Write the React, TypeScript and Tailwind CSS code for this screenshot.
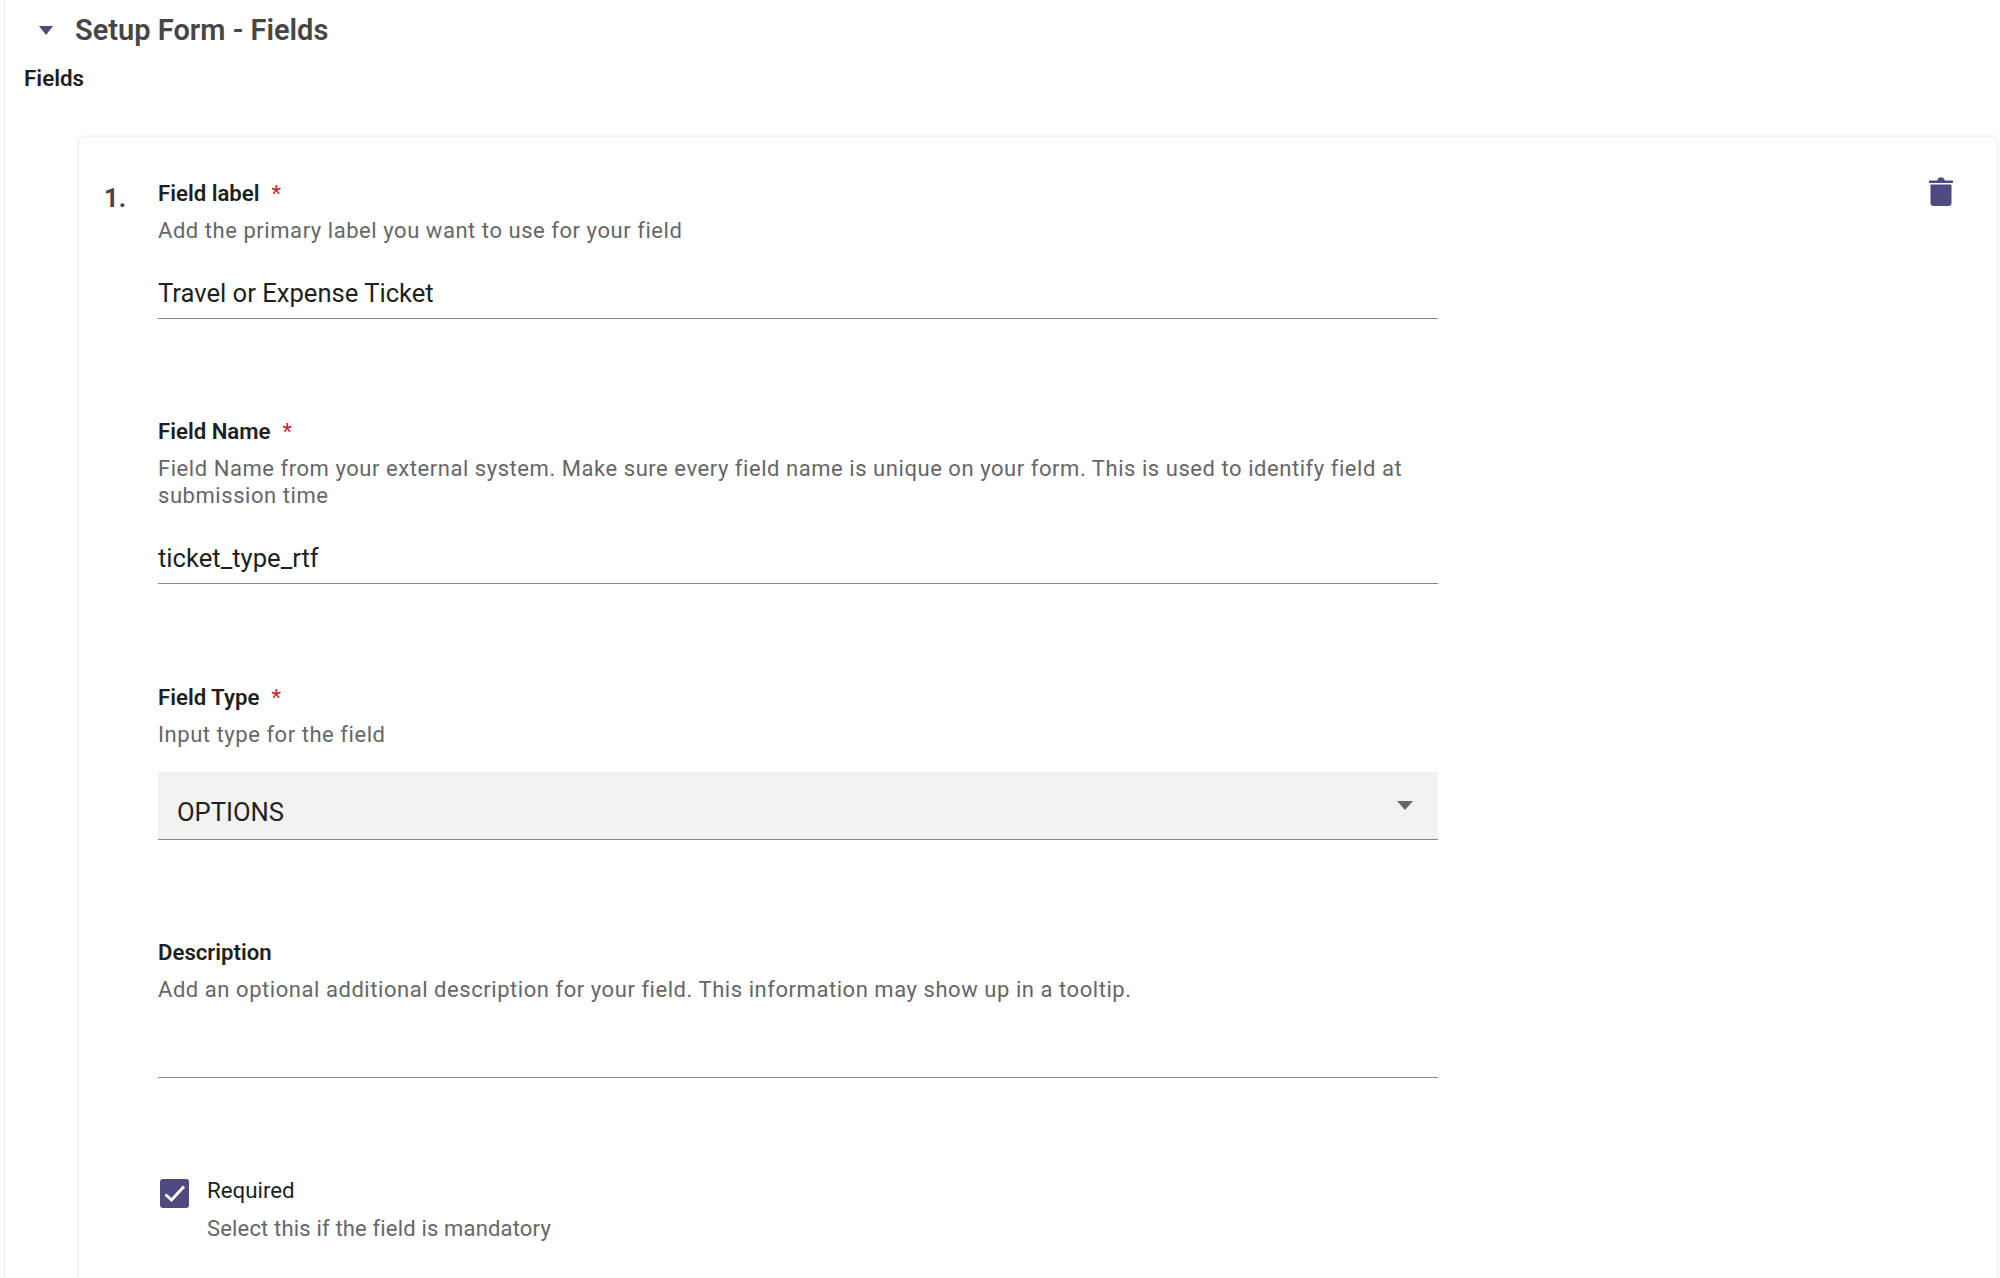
const Label = ({ text, required }: { text: string; required?: boolean }) => (
  <div className="h-[27px] text-[22.200px] leading-[27px] font-semibold text-[#201f1e]">
    {text}
    {required && <span className="ml-3 font-normal text-[#c4262e]">*</span>}
  </div>
)

const Hint = ({ children }: { children: string }) => (
  <p className="mt-[10px] text-[22px] leading-[27px] tracking-[0.55px] text-[#666666]">{children}</p>
)

const TextInput = ({ value }: { value?: string }) => (
  <div className="mt-[27px] h-[48px] border-b border-[#8a8886] text-[25.600px] leading-[44px] text-[#201f1e]">
    {value}
  </div>
)

export default function App() {
  return (
    <div className="h-[1278px] overflow-hidden bg-white font-['Roboto',sans-serif]">
      <div className="ml-1 h-full border-l border-[#ececec] pr-[2px]">
        <div className="flex h-[60px] items-center pl-[34px]">
          <svg className="h-[9px] w-[14px]" viewBox="0 0 14 9">
            <path d="M0 0h14L7 9z" fill="#4f4a80" />
          </svg>
          <h2 className="ml-[22px] text-[29px] leading-[60px] font-semibold text-[#484644]">Setup Form - Fields</h2>
        </div>
        <div className="mt-1 pl-[19px] text-[22.400px] leading-[28px] font-semibold text-[#201f1e]">Fields</div>

        <div className="mt-[44px] ml-[73px] flex h-[1200px] rounded-t-lg border border-b-0 border-[#f0f0f0] bg-white pt-[43px] pl-[25px] shadow-[0_0_4px_rgba(0,0,0,0.06)]">
          <div className="w-[54px] pt-[3px] text-[25.500px] leading-[30px] font-bold text-[#484644]">1.</div>

          <div className="w-[1280px]">
            <Label text="Field label" required />
            <Hint>Add the primary label you want to use for your field</Hint>
            <TextInput value="Travel or Expense Ticket" />

            <div className="mt-[99px]">
              <Label text="Field Name" required />
              <Hint>
                Field Name from your external system. Make sure every field name is unique on your form. This is used to identify field at submission time
              </Hint>
              <TextInput value="ticket_type_rtf" />
            </div>

            <div className="mt-[100px]">
              <Label text="Field Type" required />
              <Hint>Input type for the field</Hint>
              <div className="mt-[24px] flex h-[68px] items-center justify-between border-b-[1.500px] border-[#8a8886] bg-[#f3f2f1] pr-[25px] pl-[19px]">
                <span className="pt-[14px] text-[25.600px] text-[#201f1e]">OPTIONS</span>
                <svg className="h-[9px] w-4" viewBox="0 0 16 9">
                  <path d="M0 0h16L8 9z" fill="#666666" />
                </svg>
              </div>
            </div>

            <div className="mt-[99px]">
              <Label text="Description" />
              <Hint>Add an optional additional description for your field. This information may show up in a tooltip.</Hint>
              <TextInput />
            </div>

            <div className="mt-[99px] flex">
              <div className="mt-[2px] ml-[2px] flex h-[29px] w-[29px] items-center justify-center rounded-[3px] bg-[#4f4a80]">
                <svg className="h-[29px] w-[29px]" viewBox="0 0 29 29" fill="none">
                  <path d="M5.500 15.500l6 5.500L24 7.500" stroke="white" strokeWidth="3" />
                </svg>
              </div>
              <div className="ml-[18px]">
                <div className="text-[22.300px] leading-[27px] text-[#201f1e]">Required</div>
                <p className="mt-[11px] text-[22px] leading-[27px] tracking-[0.17px] text-[#666666]">Select this if the field is mandatory</p>
              </div>
            </div>
          </div>

          <div className="-mt-[3px] ml-[491px]">
            <svg className="h-[29px] w-6" viewBox="0 0 24 29">
              <path d="M0 3.500h8L9.500 1Q12 -0.500 14.500 1L16 3.500h8V6H0z" fill="#4f4a80" />
              <path d="M1.500 7.500h21V26q0 3-3 3h-15q-3 0-3-3z" fill="#4f4a80" />
            </svg>
          </div>
        </div>
      </div>
    </div>
  )
}
